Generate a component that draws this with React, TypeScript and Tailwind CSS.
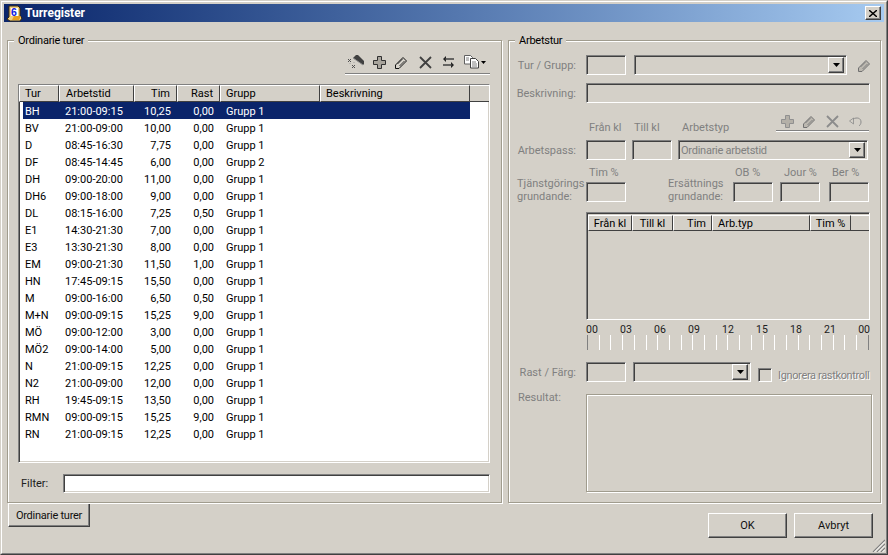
import React from 'react';

const rows = [
  ['BH', '21:00-09:15', '10,25', '0,00', 'Grupp 1'],
  ['BV', '21:00-09:00', '10,00', '0,00', 'Grupp 1'],
  ['D', '08:45-16:30', '7,75', '0,00', 'Grupp 1'],
  ['DF', '08:45-14:45', '6,00', '0,00', 'Grupp 2'],
  ['DH', '09:00-20:00', '11,00', '0,00', 'Grupp 1'],
  ['DH6', '09:00-18:00', '9,00', '0,00', 'Grupp 1'],
  ['DL', '08:15-16:00', '7,25', '0,50', 'Grupp 1'],
  ['E1', '14:30-21:30', '7,00', '0,00', 'Grupp 1'],
  ['E3', '13:30-21:30', '8,00', '0,00', 'Grupp 1'],
  ['EM', '09:00-21:30', '11,50', '1,00', 'Grupp 1'],
  ['HN', '17:45-09:15', '15,50', '0,00', 'Grupp 1'],
  ['M', '09:00-16:00', '6,50', '0,50', 'Grupp 1'],
  ['M+N', '09:00-09:15', '15,25', '9,00', 'Grupp 1'],
  ['MÖ', '09:00-12:00', '3,00', '0,00', 'Grupp 1'],
  ['MÖ2', '09:00-14:00', '5,00', '0,00', 'Grupp 1'],
  ['N', '21:00-09:15', '12,25', '0,00', 'Grupp 1'],
  ['N2', '21:00-09:00', '12,00', '0,00', 'Grupp 1'],
  ['RH', '19:45-09:15', '13,50', '0,00', 'Grupp 1'],
  ['RMN', '09:00-09:15', '15,25', '9,00', 'Grupp 1'],
  ['RN', '21:00-09:15', '12,25', '0,00', 'Grupp 1'],
];

const sunken =
  'border border-t-[#808080] border-l-[#808080] border-r-white border-b-white shadow-[inset_1px_1px_0_#404040,inset_-1px_-1px_0_#d4d0c8]';
const raised =
  'border border-t-white border-l-white border-r-[#404040] border-b-[#404040] shadow-[inset_-1px_-1px_0_#808080]';
const headerCell =
  'h-full shrink-0 flex items-center bg-[#d4d0c8] border-t border-l border-t-white border-l-white border-r border-b border-r-[#404040] border-b-[#404040] text-black';

const Field = ({ className = '' }: { className?: string }) => <div className={`h-[20px] shrink-0 ${sunken} ${className}`} />;

const Select = ({ className = '', value = '' }: { className?: string; value?: string }) => (
  <div className={`h-[20px] shrink-0 flex items-center justify-between pl-[2px] pr-[2px] ${sunken} ${className}`}>
    <span className="tracking-[-0.25px]">{value}</span>
    <div className={`w-[16px] h-[16px] flex items-center justify-center bg-[#d4d0c8] ${raised}`}>
      <svg width="7" height="4" viewBox="0 0 7 4"><path d="M0 0h7L3.500 4z" fill="#000" /></svg>
    </div>
  </div>
);

const PlusIcon = ({ muted = false }: { muted?: boolean }) => (
  <svg width="13" height="13" viewBox="0 0 13 13">
    <path d="M4.500 .5h4v4h4v4h-4v4h-4v-4h-4v-4h4z" fill={muted ? '#b4b0a8' : '#a8a49c'} stroke={muted ? '#909090' : '#303030'} />
  </svg>
);

const PencilIcon = ({ muted = false }: { muted?: boolean }) => (
  <svg width="13" height="13" viewBox="0 0 13 13">
    <path d="M.5 9 8 1.500 11.500 5 4 12.500H.5z" fill={muted ? '#bcb8b0' : '#d8d4cc'} stroke={muted ? '#707070' : '#101010'} />
    <path d="M2.500 8l5-5M4.500 10l5-5" stroke={muted ? '#808080' : '#303030'} />
  </svg>
);

const CrossIcon = ({ muted = false }: { muted?: boolean }) => (
  <svg width="13" height="13" viewBox="0 0 13 13">
    <path d="M1 1l11 11M12 1 1 12" stroke={muted ? '#8c8c8c' : '#404040'} strokeWidth="1.800" fill="none" />
  </svg>
);

const WandIcon = () => (
  <svg width="18" height="16" viewBox="0 0 18 16">
    <path d="M6 4 9 1h2l6 6v3l-1 1z" fill="#404040" />
    <path d="M6 4l10 7" stroke="#909090" fill="none" />
    <path d="M1 5l3 3M4 5 1 8M5 11l3 3M8 11l-3 3" stroke="#505050" fill="none" />
    <path d="M3 9v1M7 8v1" stroke="#a0a0a0" fill="none" />
  </svg>
);

const SwapIcon = () => (
  <svg width="13" height="14" viewBox="0 0 13 14">
    <path d="M4 1 1 4l3 3zM9 7l3 3-3 3z" fill="#202020" />
    <path d="M3 4h9M1 10h9" stroke="#404040" strokeWidth="1.500" fill="none" />
  </svg>
);

const CopyIcon = () => (
  <svg width="22" height="14" viewBox="0 0 22 14">
    <path d="M.5.5h6l2 2V9H.5z" fill="#fff" stroke="#606060" />
    <path d="M6.500 3.500h5l3 3v6.500h-8z" fill="#fff" stroke="#404040" />
    <path d="M8 7h4M8 9h5M8 11h5M2 3h3M2 5h3" stroke="#808080" fill="none" />
    <path d="M17 6h5l-2.500 3z" fill="#000" />
  </svg>
);

const UndoIcon = () => (
  <svg width="13" height="11" viewBox="0 0 13 11">
    <path d="M.5 5l4-3v6z" fill="#d4d0c8" stroke="#8c8c8c" strokeWidth=".8" />
    <path d="M4 3c4-2 8-1 8 3 0 2-1 3-2 4" stroke="#8c8c8c" fill="none" />
  </svg>
);

const AppIcon = () => (
  <svg width="17" height="17" viewBox="0 0 17 17">
    <path d="M3 1h9l2 2v8l2 2-2 3H4l-3-2 2-2z" fill="#f0d080" stroke="#3a2a10" />
    <path d="M5 3h7v8H5z" fill="#fff" />
    <text x="5" y="10.500" fontSize="10.500" fontWeight="700" fill="#1020e0" fontFamily="'Liberation Sans', sans-serif">6</text>
    <path d="M8 11h7l-2 4H6z" fill="#e8a020" />
  </svg>
);

const Group = ({ title, className, children }: { title: string; className: string; children: React.ReactNode }) => (
  <div className={`relative shrink-0 h-[463px] border border-[#a09c8e] shadow-[inset_1px_1px_0_#fff,1px_1px_0_#fff] ${className}`}>
    <span className="absolute -top-[7px] left-[6px] px-[4px] bg-[#d4d0c8] leading-[13px] tracking-[-0.25px] text-black">{title}</span>
    {children}
  </div>
);

export default function App() {
  const hours = ['00', '03', '06', '09', '12', '15', '18', '21', '00'];
  return (
    <div
      className="relative w-[888px] h-[555px] overflow-hidden bg-[#d4d0c8] border border-t-[#d4d0c8] border-l-[#d4d0c8] border-r-[#404040] border-b-[#404040] text-[11px] leading-[13px] text-[#808080]"
      style={{ fontFamily: "Roboto, 'Liberation Sans', Arial, sans-serif" }}
    >
      <div className="h-[553px] border border-t-white border-l-white border-r-[#808080] border-b-[#808080] p-[2px]">
        {/* Title bar */}
        <div className="h-[18px] flex items-center justify-between pl-[2px] pr-[3px] bg-gradient-to-r from-[#0a246a] to-[#a6caf0]">
          <div className="flex items-center gap-[2px]">
            <AppIcon />
            <span className="text-white font-bold text-[12px]">Turregister</span>
          </div>
          <div className={`w-[16px] h-[14px] flex items-center justify-center bg-[#d4d0c8] ${raised}`}>
            <svg width="8" height="7" viewBox="0 0 8 7"><path d="M0 0l8 7M8 0 0 7" stroke="#000" strokeWidth="1.400" fill="none" /></svg>
          </div>
        </div>

        <div className="flex gap-[6px] mt-[18px] ml-[3px]">
          {/* Left group */}
          <Group title="Ordinarie turer" className="w-[495px]">
            <div className="ml-auto mt-[11px] mr-[11px] w-[145px] h-[22px] flex items-center pl-[2px] pb-[1px] border-b border-b-[#808080] shadow-[0_1px_0_#fff]">
              <WandIcon />
              <div className="ml-[8px]"><PlusIcon /></div>
              <div className="ml-[9px]"><PencilIcon /></div>
              <div className="ml-[11px]"><CrossIcon /></div>
              <div className="ml-[10px]"><SwapIcon /></div>
              <div className="ml-[9px]"><CopyIcon /></div>
            </div>
            <div className={`ml-[10px] mt-[10px] w-[472px] h-[379px] bg-white overflow-hidden ${sunken} text-black`}>
              <div className="h-[17px] flex">
                <div className={`w-[40px] pl-[5px] ${headerCell}`}>Tur</div>
                <div className={`w-[75px] pl-[6px] ${headerCell}`}>Arbetstid</div>
                <div className={`w-[43px] justify-end pr-[6px] ${headerCell}`}>Tim</div>
                <div className={`w-[43px] justify-end pr-[6px] ${headerCell}`}>Rast</div>
                <div className={`w-[100px] pl-[5px] ${headerCell}`}>Grupp</div>
                <div className={`w-[150px] pl-[5px] ${headerCell}`}>Beskrivning</div>
                <div className="flex-1 bg-[#d4d0c8] border-t border-t-white border-b border-b-[#404040]" />
              </div>
              <div>
                {rows.map((r, i) => (
                  <div key={r[0]} className={`h-[17px] pt-[2px] ml-[4px] w-[447px] flex items-center ${i === 0 ? 'bg-[#0a246a] text-white' : ''}`}>
                    <span className="w-[36px] pl-[2px] shrink-0">{r[0]}</span>
                    <span className="w-[75px] pl-[6px] shrink-0">{r[1]}</span>
                    <span className="w-[43px] pr-[6px] shrink-0 text-right">{r[2]}</span>
                    <span className="w-[43px] pr-[6px] shrink-0 text-right">{r[3]}</span>
                    <span className="pl-[6px]">{r[4]}</span>
                  </div>
                ))}
              </div>
            </div>
            <div className="flex items-center mt-[11px] ml-[13px]">
              <span className="w-[42px] text-[#202020]">Filter:</span>
              <div className={`w-[427px] h-[19px] bg-white ${sunken}`} />
            </div>
          </Group>

          {/* Right group */}
          <Group title="Arbetstur" className="w-[373px]">
            <div className="pt-[14px] flex flex-col">
              <div className="flex items-center">
                <span className="w-[67px] text-right mr-[10px]">Tur / Grupp:</span>
                <Field className="w-[40px]" />
                <Select className="w-[213px] ml-[8px]" />
                <div className="ml-[11px]"><PencilIcon muted /></div>
              </div>
              <div className="flex items-center mt-[8px]">
                <span className="w-[67px] text-right mr-[10px]">Beskrivning:</span>
                <Field className="w-[284px]" />
              </div>
              <div className="flex items-end h-[25px] mt-[9px] ml-[77px]">
                <span className="w-[46px] pl-[3px] pb-[3px]">Från kl</span>
                <span className="w-[50px] pl-[2px] pb-[3px]">Till kl</span>
                <span className="w-[95px] pb-[3px]">Arbetstyp</span>
                <div className="-ml-px mb-[6px] w-[93px] h-[19px] flex items-center pl-[5px] border-b border-b-[#808080] shadow-[0_1px_0_#fff]">
                  <PlusIcon muted />
                  <div className="ml-[9px]"><PencilIcon muted /></div>
                  <div className="ml-[10px]"><CrossIcon muted /></div>
                  <div className="ml-[10px]"><UndoIcon /></div>
                </div>
              </div>
              <div className="flex items-center mt-[3px]">
                <span className="w-[67px] text-right mr-[10px]">Arbetspass:</span>
                <Field className="w-[40px]" />
                <Field className="w-[40px] ml-[6px]" />
                <Select className="w-[190px] ml-[6px]" value="Ordinarie arbetstid" />
              </div>
              <div className="flex h-[36px] mt-[6px] ml-[8px]">
                <div className="w-[69px] pt-[11px]">Tjänstgörings<br />grundande:</div>
                <div className="w-[82px]">
                  <div className="pl-[3px] mb-[3px]">Tim %</div>
                  <Field className="w-[40px]" />
                </div>
                <div className="w-[65px] pt-[11px]">Ersättnings<br />grundande:</div>
                <div className="w-[47px]">
                  <div className="pl-[2px] mb-[3px]">OB %</div>
                  <Field className="w-[40px]" />
                </div>
                <div className="w-[49px]">
                  <div className="pl-[4px] mb-[3px]">Jour %</div>
                  <Field className="w-[40px]" />
                </div>
                <div>
                  <div className="pl-[3px] mb-[3px]">Ber %</div>
                  <Field className="w-[40px]" />
                </div>
              </div>
              <div className={`ml-[77px] mt-[10px] w-[284px] h-[108px] overflow-hidden ${sunken} text-black`}>
                <div className="h-[16px] ml-[1px] mt-[2px] flex">
                  <div className={`w-[44px] justify-center ${headerCell}`}>Från kl</div>
                  <div className={`w-[41px] justify-center ${headerCell}`}>Till kl</div>
                  <div className={`w-[39px] justify-end pr-[5px] ${headerCell}`}>Tim</div>
                  <div className={`w-[98px] pl-[5px] ${headerCell}`}>Arb.typ</div>
                  <div className={`w-[41px] justify-center ${headerCell}`}>Tim %</div>
                  <div className="flex-1 border-t border-t-white border-b border-b-[#404040]" />
                </div>
              </div>
              <div className="ml-[77px] mt-[3px] w-[284px] h-[12px] flex justify-between text-[#202020] text-[10.500px]">
                {hours.map((h, i) => <span key={i}>{h}</span>)}
              </div>
              <div className="ml-[78px] w-[282px] h-[15px] flex justify-between">
                {Array.from({ length: 25 }).map((_, i) => (
                  <div key={i} className={`w-px h-full ${i === 0 || i === 24 ? 'bg-[#808080]' : 'bg-white'}`} />
                ))}
              </div>
              <div className="flex items-center mt-[12px]">
                <span className="w-[67px] text-right mr-[10px]">Rast / Färg:</span>
                <Field className="w-[40px]" />
                <Select className="w-[118px] ml-[7px]" />
                <div className={`w-[14px] h-[14px] ml-[7px] mt-[6px] ${sunken}`} />
                <span className="ml-[6px] mt-[6px] tracking-[-0.35px] text-[#808080] [text-shadow:1px_1px_0_#fff] whitespace-nowrap">Ignorera rastkontroll</span>
              </div>
              <div className="flex items-start mt-[12px]">
                <span className="w-[67px] pl-[9px] mr-[10px] -mt-[3px]">Resultat:</span>
                <div className="w-[286px] h-[98px] border border-[#a09c8e] shadow-[inset_1px_1px_0_#fff,1px_1px_0_#fff]" />
              </div>
            </div>
          </Group>
        </div>

        {/* Bottom strip */}
        <div className="flex items-start">
          <div className={`ml-[4px] mt-px w-[82px] h-[23px] flex items-center justify-center tracking-[-0.25px] text-[#101010] border-l border-l-white border-r border-r-[#404040] border-b border-b-[#404040] shadow-[inset_-1px_-1px_0_#808080]`}>
            Ordinarie turer
          </div>
          <div className={`ml-[618px] mt-[10px] w-[79px] h-[25px] flex items-center justify-center text-[#101010] ${raised}`}>OK</div>
          <div className={`ml-[7px] mt-[10px] w-[79px] h-[25px] flex items-center justify-center text-[#101010] ${raised}`}>Avbryt</div>
        </div>
      </div>
      {/* Resize grip */}
      <svg className="absolute right-[2px] bottom-[2px]" width="13" height="13" viewBox="0 0 13 13">
        <path d="M13 1 1 13M13 5 5 13M13 9 9 13" stroke="#808080" strokeWidth="1.200" fill="none" />
        <path d="M13 2.500 2.500 13M13 6.500 6.500 13M13 10.500 10.500 13" stroke="#fff" fill="none" />
      </svg>
    </div>
  );
}
